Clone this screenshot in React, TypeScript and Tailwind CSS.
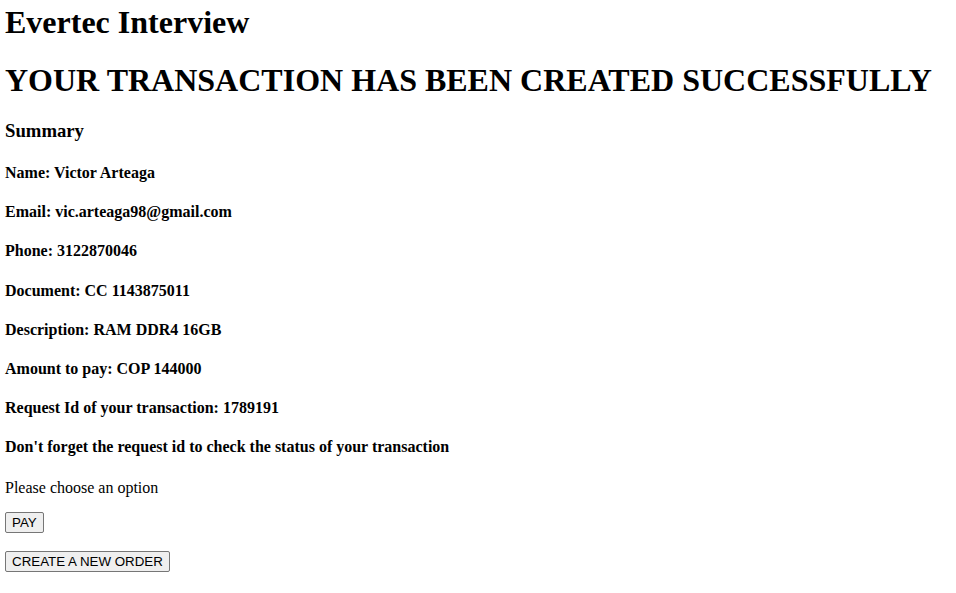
import React from "react";

const h4 = "m-0 text-[16px] leading-[18px] font-bold";
const btn =
  "bg-[#efefef] border border-[#767676] rounded-[2px] px-[6px] py-[1px] text-[13.33px] leading-[17px] text-black";

export default function App() {
  const rows = [
    "Name: Victor Arteaga",
    "Email: vic.arteaga98@gmail.com",
    "Phone: 3122870046",
    "Document: CC 1143875011",
    "Description: RAM DDR4 16GB",
    "Amount to pay: COP 144000",
    "Request Id of your transaction: 1789191",
    "Don't forget the request id to check the status of your transaction",
  ];
  return (
    <div
      className="min-h-[593px] bg-white text-black pl-[5px] pt-[4px] flex flex-col items-start"
      style={{ fontFamily: '"Liberation Serif", "Times New Roman", serif' }}
    >
      <h1 className="m-0 text-[32px] leading-[37px] font-bold">Evertec Interview</h1>
      <h1 className="m-0 mt-[21px] text-[32px] leading-[37px] font-bold">
        YOUR TRANSACTION HAS BEEN CREATED SUCCESSFULLY
      </h1>
      <h3 className="m-0 mt-[21px] text-[18.72px] leading-[22px] font-bold">Summary</h3>
      <div className="flex flex-col gap-[21.2px] mt-[22px]">
        {rows.map((r) => (
          <h4 key={r} className={h4}>
            {r}
          </h4>
        ))}
      </div>
      <p className="m-0 mt-[23px] text-[16px] leading-[18px]">Please choose an option</p>
      <div className="mt-[15px] flex flex-col items-start gap-[18px]">
        <button className={btn} style={{ fontFamily: '"Liberation Sans", Arial, sans-serif' }}>
          PAY
        </button>
        <button className={btn} style={{ fontFamily: '"Liberation Sans", Arial, sans-serif' }}>
          CREATE A NEW ORDER
        </button>
      </div>
    </div>
  );
}
